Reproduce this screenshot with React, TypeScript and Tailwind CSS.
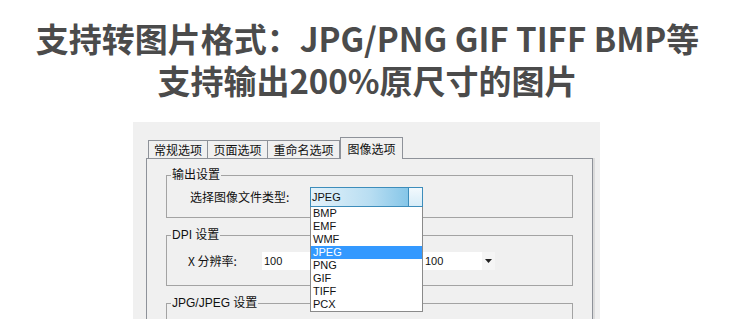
import React from 'react';

const cjk = { fontFamily: '"Noto Sans CJK SC", "Noto Sans", sans-serif' };
const ui = { fontFamily: '"Liberation Sans", "Noto Sans CJK SC", sans-serif' };

const tabs = [
  { label: '常规选项', w: 'w-[60px]' },
  { label: '页面选项', w: 'w-[61px]' },
  { label: '重命名选项', w: 'w-[73px]' },
];

const formats = ['BMP', 'EMF', 'WMF', 'JPEG', 'PNG', 'GIF', 'TIFF', 'PCX'];

const Group = ({ title, className, children }: any) => (
  <fieldset className={`border border-[#a3a3a3] ${className}`}>
    <legend className="ml-[4px] px-[1px] text-[12px] leading-[14px] text-[#111]" style={ui}>
      {title}
    </legend>
    {children}
  </fieldset>
);

const SmallCombo = ({ value, w }: any) => (
  <div className={`flex h-[18px] items-center bg-white ${w}`}>
    <span className="flex-1 pl-[2px] text-[11px] text-[#111]" style={ui}>{value}</span>
    <div className="flex h-full w-[13px] items-center justify-center bg-[#f5f5f5]">
      <svg width="7" height="4" viewBox="0 0 7 4"><path d="M0 0h7L3.5 4z" fill="#222" /></svg>
    </div>
  </div>
);

export default function App() {
  return (
    <div className="relative flex h-[319px] w-[735px] flex-col overflow-hidden bg-white">
      <p className="pt-[17px] text-center text-[33px] font-bold leading-[42px] text-[#4b4b4b]" style={cjk}>
        支持转图片格式：JPG/PNG GIF TIFF BMP等
        <br />
        支持输出200%原尺寸的图片
      </p>

      <div className="relative ml-[133px] mt-[21px] h-[200px] w-[467px] bg-[#f0f0f0] pl-[13px] pt-[15px]">
        <div className="flex items-end pl-[2px] text-[12px] text-[#111]" style={cjk}>
          {tabs.map((t, i) => (
            <div
              key={t.label}
              className={`flex h-[18px] items-center justify-center border-x border-t border-[#8e9299] leading-none ${t.w} ${i > 0 ? '-ml-px' : ''}`}
            >
              {t.label}
            </div>
          ))}
          <div className="relative z-10 -mb-px flex h-[22px] w-[63px] items-center justify-center border-x border-t border-[#8e9299] bg-[#f0f0f0] leading-none">
            图像选项
          </div>
        </div>

        <div className="h-[200px] w-[447px] border border-[#8e9299] px-[19px] pt-[9px] shadow-[2px_0_0_#dcdcdc]">
          <Group title="输出设置" className="pb-[10px] pt-[5px]">
            <div className="flex items-center pl-[23px]">
              <span className="w-[120px] text-[12px] text-[#111]" style={cjk}>选择图像文件类型:</span>
              <div className="flex h-[20px] w-[113px] border border-[#3d8dbb]">
                <div className="flex flex-1 items-center bg-[linear-gradient(to_right,#e4f2fa,#b9def2_60%,#86c6e8)] pl-[1px]">
                  <span className="text-[11px] text-[#111]" style={ui}>JPEG</span>
                </div>
                <div className="w-[14px] border-l border-[#3d8dbb] bg-[linear-gradient(to_bottom,#f2f9fd,#d6ecf8)]" />
              </div>
            </div>
          </Group>

          <Group title="DPI 设置" className="mt-[10px] pb-[15px] pt-[10px]">
            <div className="flex items-center pl-[21px]">
              <span className="w-[74px] text-[12px] text-[#111]" style={cjk}>X 分辨率:</span>
              <SmallCombo value="100" w="w-[68px]" />
              <span className="ml-[12px] w-[81px] text-[12px] text-[#111]" style={cjk}>Y 分辨率:</span>
              <SmallCombo value="100" w="w-[72px]" />
            </div>
          </Group>

          <Group title="JPG/JPEG 设置" className="mt-[10px] h-[60px]" />
        </div>

        <ul className="absolute left-[177px] top-[85px] z-20 w-[113px] border border-t-0 border-[#8a8a8a] bg-white">
          {formats.map((f) => (
            <li
              key={f}
              className={`h-[13px] pl-[2px] text-[11px] leading-[13px] ${f === 'JPEG' ? 'bg-[#3399ff] text-white' : 'text-[#111]'}`}
              style={ui}
            >
              {f}
            </li>
          ))}
        </ul>
      </div>
    </div>
  );
}
